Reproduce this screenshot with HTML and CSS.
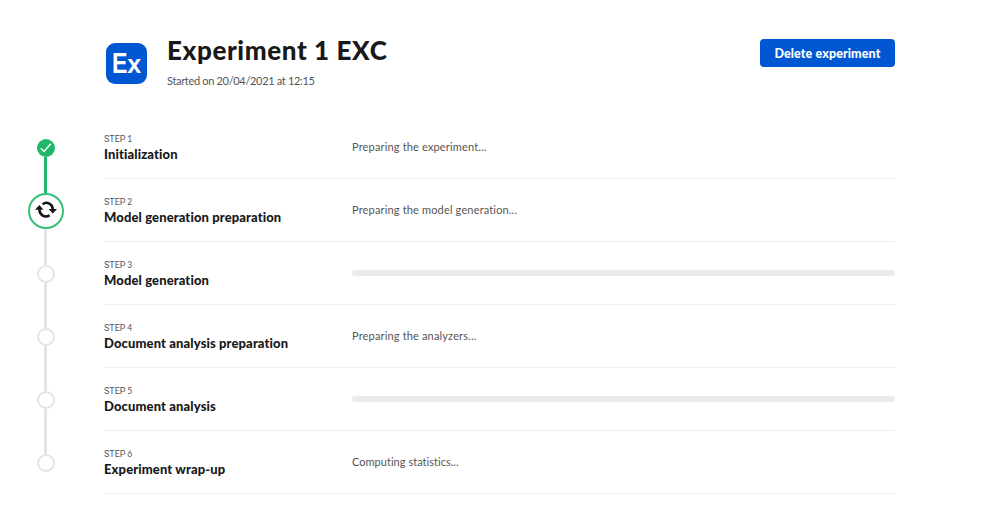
FILE: index.html
```html
<!DOCTYPE html>
<html lang="en">
<head>
<meta charset="utf-8">
<title>Experiment 1 EXC</title>
<link rel="stylesheet" href="styles.css">
</head>
<body>
<main class="page">
  <header class="header">
    <div class="logo"><span class="logo-big">E</span><span class="logo-small">x</span></div>
    <div class="heading">
      <h1>Experiment 1 EXC</h1>
      <p>Started on 20/04/2021 at 12:15</p>
    </div>
    <button class="delete" type="button">Delete experiment</button>
  </header>
  <ol class="steps">
    <li class="step done">
      <div class="track"><i class="line top"></i><span class="dot"><svg width="18" height="18" viewBox="0 0 18 18"><path d="M3.8 9.2l3.2 3.2 6.8-7.6" fill="none" stroke="#fff" stroke-width="1.4"/></svg></span><i class="line bottom"></i></div>
      <div class="row"><div class="name"><small>STEP <b>1</b></small><h2>Initialization</h2></div><p class="info">Preparing the experiment...</p></div>
    </li>
    <li class="step active">
      <div class="track"><i class="line top"></i><span class="dot"><svg class="sync" width="22" height="18" viewBox="0 0 22 18"><g fill="none" stroke="#151515" stroke-width="2.5"><path d="M7.6 3.2C12-.1 17.8 3 17.8 8.4"/><path d="M4.4 8.2C4.2 14 10 17.4 14.6 14.2"/></g><path d="M13.6 8h8.4L17.8 12.6zM0 8.8h8.4L4.4 4z" fill="#151515"/></svg></span><i class="line bottom"></i></div>
      <div class="row"><div class="name"><small>STEP <b>2</b></small><h2>Model generation preparation</h2></div><p class="info">Preparing the model generation...</p></div>
    </li>
    <li class="step">
      <div class="track"><i class="line top"></i><span class="dot"></span><i class="line bottom"></i></div>
      <div class="row"><div class="name"><small>STEP <b>3</b></small><h2>Model generation</h2></div><div class="bar"></div></div>
    </li>
    <li class="step">
      <div class="track"><i class="line top"></i><span class="dot"></span><i class="line bottom"></i></div>
      <div class="row"><div class="name"><small>STEP <b>4</b></small><h2>Document analysis preparation</h2></div><p class="info">Preparing the analyzers...</p></div>
    </li>
    <li class="step">
      <div class="track"><i class="line top"></i><span class="dot"></span><i class="line bottom"></i></div>
      <div class="row"><div class="name"><small>STEP <b>5</b></small><h2>Document analysis</h2></div><div class="bar"></div></div>
    </li>
    <li class="step">
      <div class="track"><i class="line top"></i><span class="dot"></span><i class="line bottom"></i></div>
      <div class="row"><div class="name"><small>STEP <b>6</b></small><h2>Experiment wrap-up</h2></div><p class="info tight">Computing statistics...</p></div>
    </li>
  </ol>
</main>
</body>
</html>
```
FILE: styles.css
```css
* { box-sizing: border-box; margin: 0; padding: 0; }
body { background: #fff; color: #191919; font-family: Lato, "Liberation Sans", sans-serif; }
.page { width: 895px; padding: 33px 0 0 28px; }
.header { display: flex; height: 83px; padding-left: 78px; }
.logo { width: 41px; height: 41px; margin: 10px 20px 0 0; border-radius: 9px; background: #0057d2; color: #fff; display: flex; justify-content: center; align-items: baseline; line-height: 41px; font-family: "Liberation Sans", sans-serif; font-weight: 700; }
.logo-big { font-size: 29px; transform: scaleX(.8); margin: 0 -2px 0 -2px; }
.logo-small { font-size: 25px; }
.heading { flex: 1; }
h1 { font-size: 26px; line-height: 34px; font-weight: 900; white-space: nowrap; letter-spacing: .6px; }
.heading p { margin-top: 6px; font-size: 11px; line-height: 16px; color: #555; letter-spacing: -.32px; }
.delete { width: 135px; height: 28px; margin-top: 6px; padding-top: 1px; border: 0; border-radius: 4px; background: #0057d2; color: #fff; font: 900 12.5px/27px Lato, sans-serif; letter-spacing: .1px; white-space: nowrap; }
.steps { list-style: none; }
.step { display: flex; height: 63px; }
.track { width: 36px; margin-right: 40px; display: flex; flex-direction: column; }
.line { width: 3px; margin-left: 16px; background: #e5e5e5; }
.top { height: 23px; }
.bottom { height: 22px; }
.dot { width: 18px; height: 18px; margin-left: 9px; border: 2px solid #e5e5e5; border-radius: 50%; display: flex; align-items: center; justify-content: center; flex: none; }
.done .dot { border: 0; background: #20b768; }
.done .bottom, .active .top { background: #20b768; }
.active .dot { width: 36px; height: 36px; margin-left: 0; border-color: #36bf78; }
.active .top { height: 14px; }
.active .bottom { height: 13px; }
.sync { margin-bottom: 2px; }
.step:first-child .top, .step:last-child .bottom { background: transparent; }
.row { flex: 1; display: flex; border-bottom: 1px solid #eee; }
.name { width: 248px; padding-top: 17px; }
small { display: block; font: 9px/12px Roboto, sans-serif; color: #555; word-spacing: -.5px; }
small b { font: 400 8.5px/12px Lato, sans-serif; }
h2 { font-size: 13px; line-height: 18px; font-weight: 900; white-space: nowrap; letter-spacing: .12px; }
.info { font-size: 11px; line-height: 16px; color: #555; padding-top: 23px; letter-spacing: .16px; }
.tight { letter-spacing: .03px; }
.bar { flex: 1; height: 6px; margin-top: 28px; border-radius: 3px; background: #e9ecef; }
```
